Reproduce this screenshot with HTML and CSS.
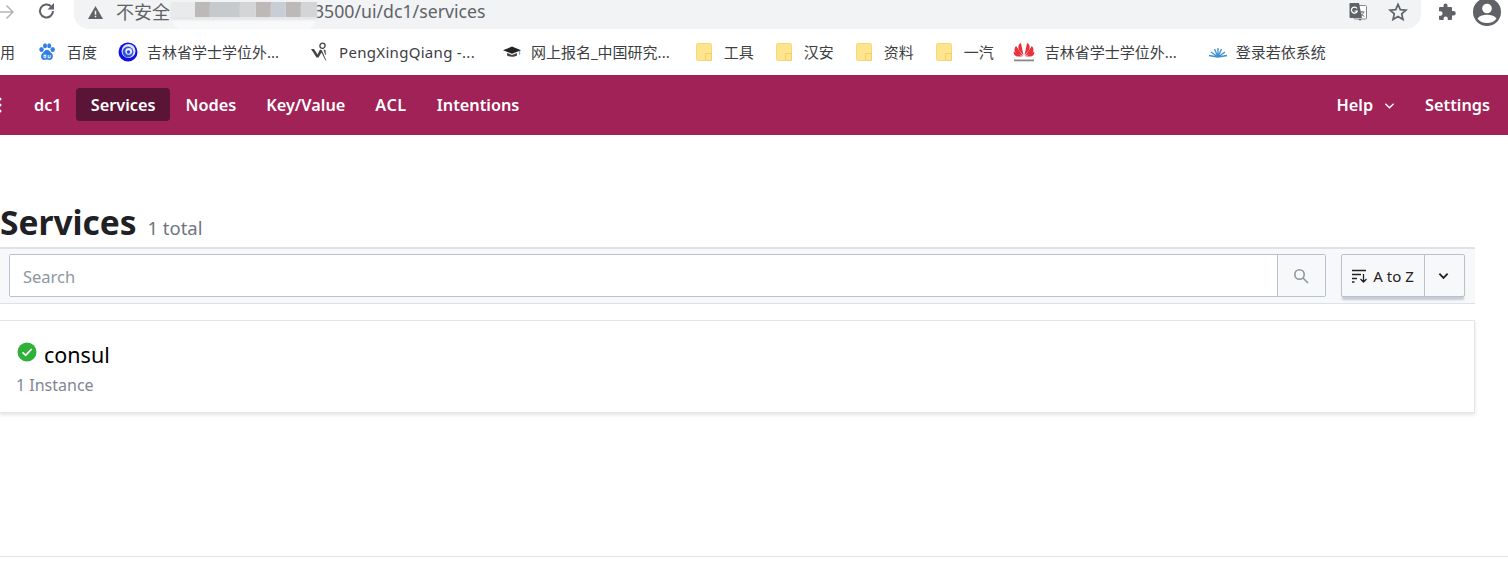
FILE: index.html
```html
<!DOCTYPE html>
<html lang="en">
<head>
    <meta charset="UTF-8">
    <meta name="viewport" content="width=device-width, initial-scale=1.0">
    <title>Services - Consul</title>
    <link rel="stylesheet" href="styles.css">
</head>
<body>
    <div class="browser-bar">
        <svg class="back-icon" viewBox="0 0 16 16"><path d="M0 8h14M7.500 1.500 14 8l-6.500 6.500"/></svg>
        <svg class="reload-icon" viewBox="0 0 20 20"><path d="M16 10a6.500 6.500 0 1 1-2-4.700"/><path class="solid" d="M17 2v6.500h-6.500z"/></svg>
        <div class="omnibox">
            <svg class="warn-icon" viewBox="0 0 16 16"><path d="M8 1 16 15H0z"/><path class="cut" d="M7.200 6h1.600v4.500H7.200zM7.200 11.500h1.600V13H7.200z"/></svg>
            <span class="url-label">不安全</span>
            <span class="url-blur">
                <i class="b1"></i><i class="b2"></i><i class="b3"></i><i class="b4"></i><i class="b2"></i><i class="b5"></i><i class="b2"></i><i class="b4"></i>
            </span>
            <span class="url-text">3500/ui/dc1/services</span>
            <div class="omnibox-actions">
                <svg class="translate-icon" viewBox="0 0 20 20">
                    <rect class="tr-back" x="6" y="3.500" width="12.500" height="13.500" rx="1"/>
                    <path class="tr-front" d="M2 1h9l3 15H2.500a1 1 0 0 1-1-1V2a1 1 0 0 1 .5-1z"/>
                    <path class="tr-g" d="M9 6.500a3 3 0 1 0 .3 2.500H6.500"/>
                    <path class="tr-k" d="M11.500 10h5M14 9v1M15.500 10c-.5 2-2 3.500-3.500 4.300M12.800 11.500c.7 1.300 2 2.300 3.500 2.800"/>
                    <path class="tr-tail" d="M10.500 17l1.500 2 1.500-2z"/>
                </svg>
                <svg class="star-icon" viewBox="0 0 20 20"><path d="M10 2.300l2.300 5.300 5.700.5-4.300 3.800 1.300 5.600-5-3-5 3 1.300-5.600L2 8.100l5.700-.5z"/></svg>
            </div>
        </div>
        <svg class="puzzle-icon" viewBox="0 0 20 20"><path d="M8.500 1.500a2 2 0 0 1 2 2V5H14a1 1 0 0 1 1 1v3h1.500a2.200 2.200 0 0 1 0 4.500H15V17a1 1 0 0 1-1 1h-3.200v-1.500a2.100 2.100 0 0 0-4.200 0V18H3a1 1 0 0 1-1-1v-3.300h1.400a2.200 2.200 0 0 0 0-4.400H2V6a1 1 0 0 1 1-1h3.500V3.500a2 2 0 0 1 2-2z"/></svg>
        <svg class="avatar-icon" viewBox="0 0 28 28"><circle cx="14" cy="14" r="14"/><circle class="cut" cx="14" cy="10.500" r="4.800"/><path class="cut" d="M4.500 20.500C7 17.500 10.500 16.800 14 16.800s7 .7 9.500 3.700C21.500 23.500 18 25 14 25s-7.500-1.500-9.500-4.500z"/></svg>
    </div>

    <div class="bookmarks">
        <span class="bm bm-apps">用</span>
        <a class="bm bm-baidu">
            <svg viewBox="0 0 18 18"><g fill="#2f7fe6"><ellipse cx="3.500" cy="6.500" rx="2.200" ry="2.600"/><ellipse cx="7" cy="2.800" rx="2" ry="2.500"/><ellipse cx="11.200" cy="2.800" rx="2" ry="2.500"/><ellipse cx="14.700" cy="6.500" rx="2.200" ry="2.600"/><path d="M9 6.800c2.500 0 3.300 2.500 4.800 3.800 2 1.900 1.100 6.400-1.900 6.400-1.100 0-1.800-.4-2.900-.4s-1.900.4-3 .4c-3 0-3.800-4.500-1.800-6.400C5.700 9.300 6.500 6.800 9 6.800z"/></g><path d="M6 11.500v3.200H7.800V11.500M7.800 12.500H6M10.200 12v2.700h2V12" fill="none" stroke="#fff" stroke-width=".9"/></svg>
            百度
        </a>
        <a class="bm bm-jilin">
            <svg viewBox="0 0 20 20"><circle cx="10" cy="10" r="9.500" fill="#1010e0"/><circle cx="10.500" cy="9" r="7" fill="#dfe4fb"/><circle cx="10" cy="10" r="5.400" fill="#2f55e0"/><circle cx="10.700" cy="9.300" r="3.400" fill="#e8ebff"/><circle cx="10.500" cy="10" r="1.700" fill="#2a48d8"/></svg>
            吉林省学士学位外...
        </a>
        <a class="bm bm-peng">
            <svg viewBox="0 0 20 20"><circle cx="12.500" cy="3.800" r="2.600" fill="none" stroke="#444" stroke-width="1.300"/><path d="M1 7h3l3.500 5.500L10 7.500l2 1 4.500 10.500-1.200-1-3.800-7.500-3 5h-2z" fill="#444"/><path d="M13.500 7.500l2 .5.500 5-1-.5z" fill="#555"/></svg>
            <span class="peng-text">PengXingQiang -...</span>
        </a>
        <a class="bm bm-grad">
            <svg viewBox="0 0 20 20"><path d="M0 8l10-4 10 4-10 4z" fill="#222"/><path d="M4.500 11v3c3 1.800 8 1.800 11 0v-3L10 13.200z" fill="#444"/><path d="M18.500 9v4" stroke="#4a90c8" stroke-width="1"/></svg>
            网上报名_中国研究...
        </a>
        <a class="bm bm-folder"><i class="folder"></i>工具</a>
        <a class="bm bm-folder"><i class="folder"></i>汉安</a>
        <a class="bm bm-folder"><i class="folder"></i>资料</a>
        <a class="bm bm-folder"><i class="folder"></i>一汽</a>
        <a class="bm bm-huawei">
            <svg viewBox="0 0 22 20"><g fill="#e5323b"><path d="M10.500 13.500 8 1C5.500 2 4.500 5 6 8z"/><path d="M11.500 13.500 14 1c2.500 1 3.500 4 2 7z"/><path d="M10 14 3.200 4C1 6 1 9.500 3 11.500z"/><path d="M12 14l6.800-10c2.200 2 2.200 5.500.2 7.500z"/><path d="M9.500 14.500 .8 9.500c-.5 2.500.8 4.200 3 5z"/><path d="M12.500 14.500l8.700-5c.5 2.500-.8 4.200-3 5z"/></g><rect x="1" y="17.500" width="20" height="1.800" fill="#888"/></svg>
            吉林省学士学位外...
        </a>
        <a class="bm bm-ruoyi">
            <svg viewBox="0 0 20 14"><g fill="none" stroke="#3d8fd0" stroke-width="1.300"><path d="M10 12V3M10 12 6.500 4M10 12l3.500-8M10 12 3 7M10 12l7-5M10 12 1 10.500M10 12l9-1.500"/></g></svg>
            登录若依系统
        </a>
    </div>

    <nav class="topnav">
        <div class="nav-left">
            <svg class="menu-dots" viewBox="0 0 6 16"><circle cx="1" cy="2" r="1.500"/><circle cx="1" cy="8" r="1.500"/><circle cx="1" cy="14" r="1.500"/></svg>
            <a class="nav-item nav-dc">dc1</a>
            <a class="nav-item active">Services</a>
            <a class="nav-item">Nodes</a>
            <a class="nav-item">Key/Value</a>
            <a class="nav-item nav-acl">ACL</a>
            <a class="nav-item">Intentions</a>
        </div>
        <div class="nav-right">
            <a class="nav-item">Help <svg class="help-caret" viewBox="0 0 12 8"><path d="M1.500 1.500 6 6l4.500-4.500"/></svg></a>
            <a class="nav-item">Settings</a>
        </div>
    </nav>

    <main class="content">
        <h1 class="page-title">Services <small>1 total</small></h1>

        <div class="filter-bar">
            <div class="search-box">
                <input class="search-input" type="text" placeholder="Search">
                <span class="search-btn">
                    <svg viewBox="0 0 16 16"><circle cx="6.500" cy="6.500" r="4.700"/><path d="M10 10l5 5"/></svg>
                </span>
            </div>
            <div class="sort-box">
                <span class="sort-label">
                    <svg viewBox="0 0 16 14"><path d="M0 1.500h14M0 5.500h9M0 9.500h5M0 13h2.500M11.500 5v8M8.500 10l3 3 3-3"/></svg>
                    A to Z
                </span>
                <span class="sort-caret">
                    <svg viewBox="0 0 12 8"><path d="M1.500 1.500 6 6l4.500-4.500"/></svg>
                </span>
            </div>
        </div>

        <div class="service-card">
            <div class="service-name">
                <svg class="check-icon" viewBox="0 0 20 20"><circle cx="10" cy="10" r="9.500"/><path d="M5.500 10.300l3.200 3 6-6.300"/></svg>
                consul
            </div>
            <div class="service-meta">1 Instance</div>
        </div>
    </main>

    <div class="footer-line"></div>
</body>
</html>
```
FILE: styles.css
```css
* {
    margin: 0;
    padding: 0;
    box-sizing: border-box;
}

body {
    font-family: "Noto Sans", "Noto Sans CJK SC", sans-serif;
    background: #fff;
    height: 564px;
    overflow: hidden;
}

/* browser chrome */
.browser-bar {
    height: 29px;
    display: flex;
    align-items: center;
    color: #5f6368;
}

.back-icon {
    width: 16px;
    height: 16px;
    margin-left: -1px;
    margin-top: -6px;
    fill: none;
    stroke: #b5b7ba;
    stroke-width: 1.600;
}

.reload-icon {
    width: 20px;
    height: 20px;
    margin-left: 22px;
    margin-top: -7px;
    fill: none;
    stroke: #5f6368;
    stroke-width: 2;
}

.reload-icon .solid {
    fill: #5f6368;
    stroke: none;
}

.omnibox {
    width: 1347px;
    height: 29px;
    margin-left: 17px;
    background: #f1f3f4;
    border-radius: 0 0 15px 15px;
    display: flex;
    align-items: center;
    padding: 0 14px;
    font-size: 18px;
    color: #5f6368;
}

.warn-icon {
    width: 15px;
    height: 15px;
    margin-right: 13px;
    margin-top: -5px;
    fill: #5f6368;
}

.warn-icon .cut {
    fill: #f1f3f4;
}

.url-label,
.url-text {
    margin-top: -8px;
}

.url-blur {
    display: flex;
    align-self: flex-start;
    position: relative;
    z-index: 1;
    width: 146px;
    height: 32px;
    margin-left: 1px;
    background: linear-gradient(#f1f3f4 0 20px, rgba(250, 250, 251, 0.9) 20px 27px, rgba(255, 255, 255, 0) 32px);
    border-radius: 0 0 18px 18px;
}

.url-blur i {
    display: block;
    width: 15px;
    height: 15px;
    margin-top: 2px;
    box-shadow: 0 3px 2px rgba(225, 227, 230, 0.8);
}

.url-blur .b1 { background: #e9eaec; width: 24px; }
.url-blur .b2 { background: #bdb9b7; }
.url-blur .b3 { background: #c7cacc; width: 30px; }
.url-blur .b4 { background: #d3d5d6; width: 16px; }
.url-blur .b5 { background: #c9ced6; }

.url-text {
    margin-left: -3px;
    font-size: 17.700px;
}

.omnibox-actions {
    margin-left: auto;
    display: flex;
    align-items: center;
    gap: 20px;
    margin-top: -6px;
    margin-right: -1px;
}

.translate-icon {
    width: 20px;
    height: 20px;
}

.tr-back {
    fill: #fff;
    stroke: #80868b;
    stroke-width: 1;
}

.tr-front,
.tr-tail {
    fill: #5f6368;
}

.tr-g {
    fill: none;
    stroke: #fff;
    stroke-width: 1.200;
}

.tr-k {
    fill: none;
    stroke: #5f6368;
    stroke-width: .9;
}

.star-icon {
    width: 20px;
    height: 20px;
    fill: none;
    stroke: #5f6368;
    stroke-width: 1.700;
}

.puzzle-icon {
    width: 20px;
    height: 20px;
    margin-left: 16px;
    margin-top: -6px;
    fill: #5f6368;
}

.avatar-icon {
    width: 28px;
    height: 28px;
    margin-left: 16px;
    margin-top: -6px;
    fill: #5f6368;
}

.avatar-icon .cut {
    fill: #fff;
}

.bookmarks {
    height: 46px;
    display: flex;
    align-items: center;
    padding-bottom: 1px;
    font-size: 15px;
    color: #3c4043;
    white-space: nowrap;
}

.bm {
    display: flex;
    align-items: center;
}

.bm svg {
    flex: none;
}

.bm-apps {
    width: 38px;
    margin-left: 1px;
    text-indent: -1px;
    overflow: hidden;
}

.bm-baidu svg {
    width: 18px;
    height: 18px;
    margin-right: 11px;
}

.bm-baidu {
    margin-left: -1px;
}

.bm-jilin {
    margin-left: 21px;
}

.bm-jilin svg {
    width: 20px;
    height: 20px;
    margin-right: 9px;
}

.bm-peng {
    margin-left: 31px;
}

.bm-peng svg {
    width: 20px;
    height: 20px;
    margin-right: 9px;
}

.peng-text {
    letter-spacing: .3px;
}

.bm-grad {
    margin-left: 28px;
}

.bm-grad svg {
    width: 18px;
    height: 20px;
    margin-right: 10px;
}

.bm-folder {
    margin-left: 26px;
}

.bm-folder + .bm-folder {
    margin-left: 22px;
}

.folder {
    display: block;
    position: relative;
    width: 16px;
    height: 18px;
    margin-right: 12px;
    background: #fde48f;
    border: 1px solid #f6d976;
    border-radius: 2px;
}

.folder::after {
    content: "";
    position: absolute;
    right: -1px;
    bottom: -1px;
    width: 5px;
    height: 6px;
    border: 1px solid #f2cf62;
    border-radius: 1px;
}

.bm-huawei {
    margin-left: 19px;
}

.bm-huawei svg {
    width: 22px;
    height: 20px;
    margin-right: 10px;
}

.bm-ruoyi {
    margin-left: 31px;
}

.bm-ruoyi svg {
    width: 20px;
    height: 14px;
    margin-right: 8px;
}

/* consul nav */
.topnav {
    height: 60px;
    background: #a02257;
    display: flex;
    align-items: center;
    justify-content: space-between;
    color: #fff;
    padding: 0 3px 1px 0;
}

.nav-left,
.nav-right {
    display: flex;
    align-items: center;
}

.menu-dots {
    width: 6px;
    height: 16px;
    margin-left: -1px;
    margin-right: 14px;
    fill: #fff;
}

.nav-item {
    height: 33px;
    padding: 0 15px;
    display: flex;
    align-items: center;
    font-size: 16.300px;
    font-weight: 600;
    border-radius: 4px;
}

.nav-dc {
    padding: 0 14px 0 15px;
}

.nav-acl {
    letter-spacing: .5px;
}

.nav-item.active {
    background: #5a1436;
}

.help-caret {
    width: 11px;
    height: 8px;
    margin-left: 11px;
    margin-top: 3px;
    fill: none;
    stroke: #fff;
    stroke-width: 1.500;
}

/* page */
.content {
    width: 1475px;
}

.page-title {
    margin-top: 64px;
    height: 48px;
    font-size: 33.500px;
    line-height: 46px;
    font-weight: 700;
    color: #1f2124;
    white-space: nowrap;
}

.page-title small {
    font-size: 18.500px;
    font-weight: 400;
    color: #6f7580;
    margin-left: 2px;
}

.filter-bar {
    height: 57px;
    background: #f7f8fa;
    border-top: 2px solid #dfe1e8;
    border-bottom: 1px solid #dfe1e8;
    display: flex;
    align-items: flex-start;
    padding: 5px 10px 0 9px;
}

.search-box {
    flex: 1;
    height: 43px;
    display: flex;
    background: #fff;
    border: 1px solid #bac1cc;
    border-radius: 2px;
}

.search-input {
    flex: 1;
    min-width: 0;
    border: none;
    outline: none;
    padding: 1px 0 0 13px;
    font-family: inherit;
    font-size: 16.500px;
}

.search-input::placeholder {
    color: #8e96a3;
    opacity: 1;
}

.search-btn {
    width: 48px;
    padding-right: 2px;
    background: #f7f8fa;
    border-left: 1px solid #bac1cc;
    display: flex;
    align-items: center;
    justify-content: center;
}

.search-btn svg {
    width: 16px;
    height: 16px;
    fill: none;
    stroke: #8e96a3;
    stroke-width: 1.600;
}

.sort-box {
    width: 124px;
    height: 43px;
    margin-left: 15px;
    display: flex;
    background: #f7f8fa;
    border: 1px solid #bac1cc;
    border-radius: 2px;
    box-shadow: 0 4px 2px -1px rgba(186, 193, 204, 0.8);
}

.sort-label {
    width: 83px;
    display: flex;
    align-items: center;
    justify-content: center;
    gap: 5px;
    font-size: 15px;
    color: #1f2124;
    border-right: 1px solid #bac1cc;
}

.sort-label svg {
    width: 16px;
    height: 14px;
    fill: none;
    stroke: #1f2124;
    stroke-width: 1.300;
}

.sort-caret {
    flex: 1;
    padding-right: 2px;
    display: flex;
    align-items: center;
    justify-content: center;
}

.sort-caret svg {
    width: 11px;
    height: 8px;
    fill: none;
    stroke: #1f2124;
    stroke-width: 2;
}

.service-card {
    height: 93px;
    margin-top: 16px;
    background: #fff;
    border: 1px solid #e1e4e9;
    border-left: none;
    box-shadow: 0 2px 3px rgba(31, 33, 36, 0.12);
    padding: 19px 0 0 16px;
}

.service-name {
    display: flex;
    align-items: center;
    height: 28px;
    font-size: 21.500px;
    color: #000;
}

.check-icon {
    width: 20px;
    height: 20px;
    margin: -5px 7px 0 1px;
}

.check-icon circle {
    fill: #2eb039;
}

.check-icon path {
    fill: none;
    stroke: #fff;
    stroke-width: 1.800;
}

.service-meta {
    margin-top: 6px;
    font-size: 16px;
    line-height: 22px;
    color: #7f8692;
}

.footer-line {
    margin-top: 143px;
    height: 1px;
    background: #e1e4e9;
}
```
